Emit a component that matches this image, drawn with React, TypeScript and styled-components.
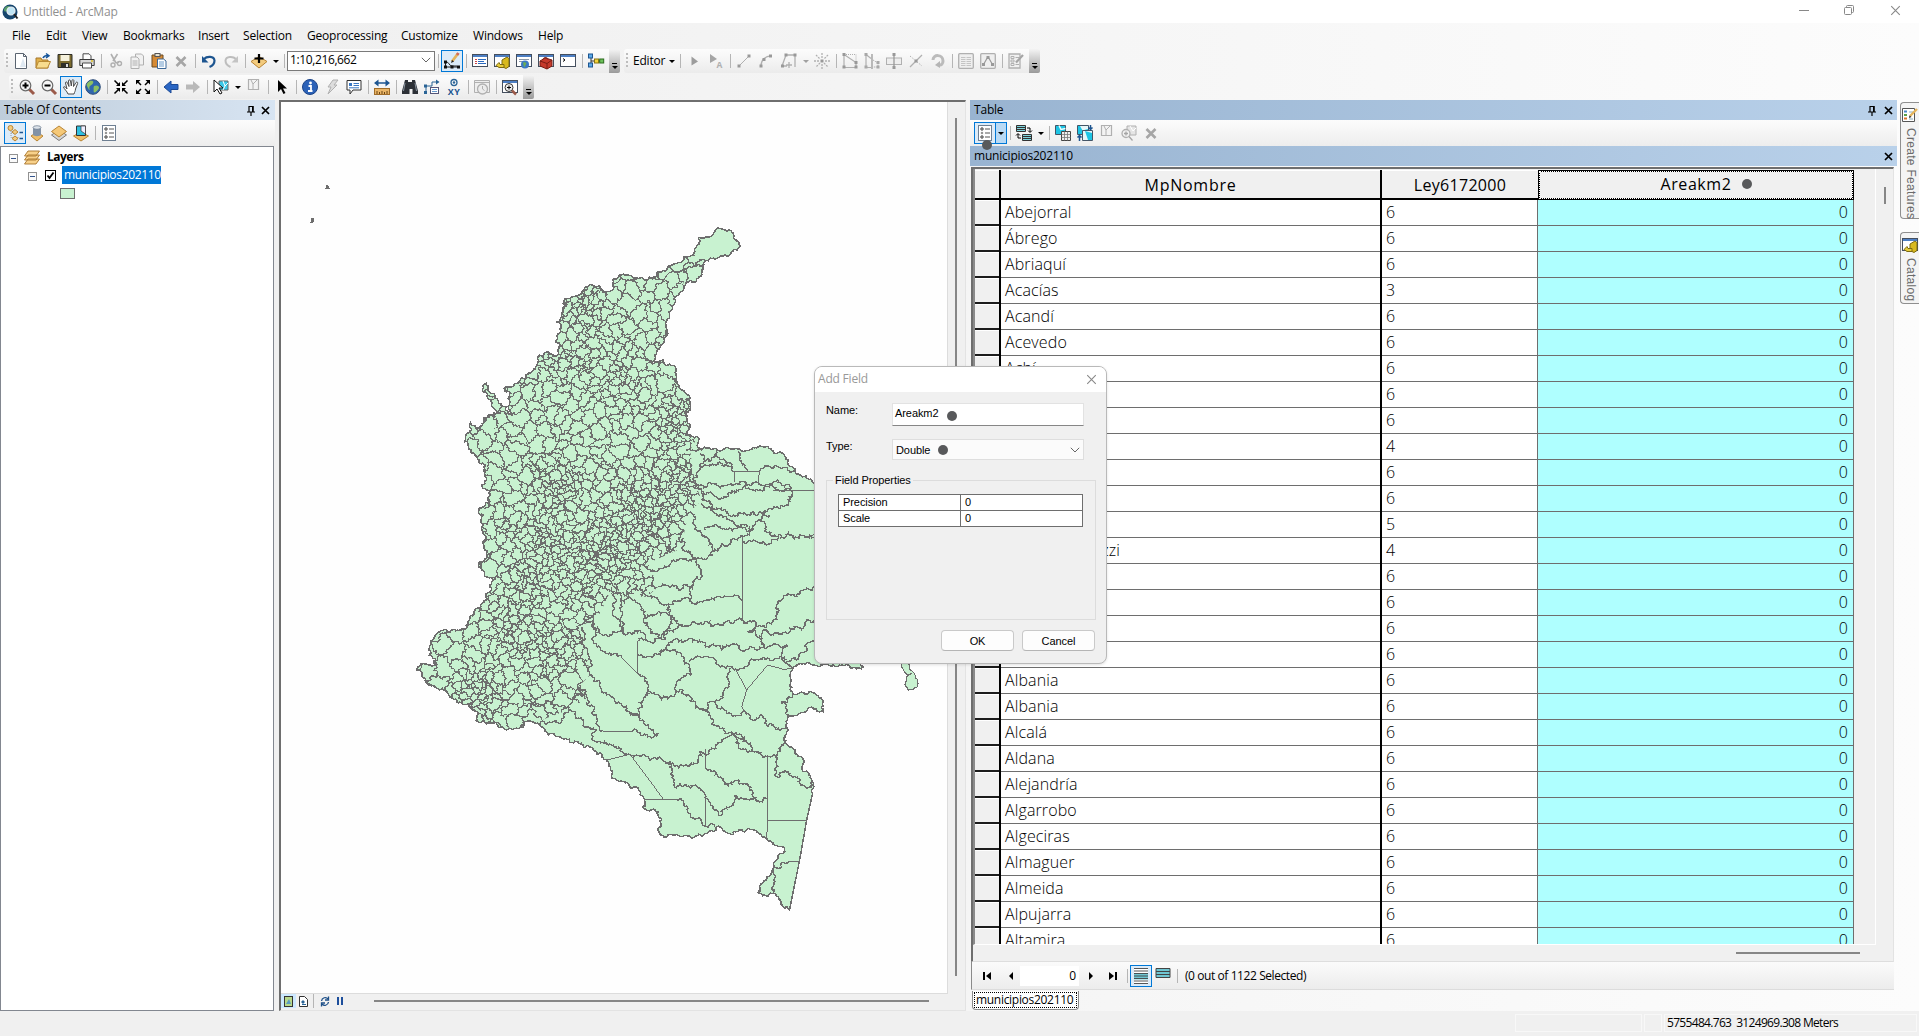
import React from "react";
import styled, { createGlobalStyle, css } from "styled-components";

const UI = `"Open Sans", "Noto Sans", sans-serif`;
const SANS = `"Liberation Sans", Arial, sans-serif`;

const Global = createGlobalStyle`
  html, body { margin: 0; padding: 0; overflow: hidden; }
  * { box-sizing: border-box; }
  svg { display: block; }
`;

/* ---------- window ---------- */
const Window = styled.div`
  width: 1919px; height: 1036px; overflow: hidden; position: relative;
  display: flex; flex-direction: column;
  background: linear-gradient(90deg, #f0f0f0 0, #f0f0f0 300px, #fcfcfc 1919px);
  font: 12px/16px ${UI}; letter-spacing: -0.2px; color: #000;
`;
const TitleBar = styled.header`
  height: 23px; background: #fff; display: flex; align-items: center; justify-content: space-between;
  color: #8f8f8f; padding: 0 18px 0 2px; flex: none;
`;
const TitleLeft = styled.div`display: flex; align-items: center; gap: 5px;`;
const WinButtons = styled.div`display: flex; gap: 35px; padding-bottom: 3px;`;
const MenuBar = styled.nav`
  height: 26px; display: flex; align-items: center; gap: 16px; padding-left: 12px; flex: none;
`;
const MenuItem = styled.span<{ $w: number }>`width: ${(p) => p.$w}px; white-space: nowrap;`;

/* ---------- toolbars ---------- */
const ToolRow = styled.div<{ $left: number; $h: number }>`
  height: ${(p) => p.$h}px; padding-left: ${(p) => p.$left}px; display: flex; align-items: flex-start; gap: 4px; flex: none;
`;
const Toolbar = styled.div`
  height: 24px; display: flex; align-items: center; border-radius: 3px;
  background: linear-gradient(#fcfcfc, #f4f4f4 50%, #ebebeb);
`;
const Slot = styled.span<{ $w?: number; $on?: boolean }>`
  width: ${(p) => p.$w ?? 22}px; height: 22px; flex: none;
  display: flex; align-items: center; justify-content: center;
  ${(p) => p.$on && css`background: #dcebf8; border: 1px solid #0078d7;`}
`;
const Sep = styled.i<{ $w?: number }>`
  width: ${(p) => p.$w ?? 6}px; height: 14px; flex: none; display: flex; justify-content: center;
  &::before { content: ""; width: 1px; height: 14px; background: #b5b5b5; }
`;
const Grip = styled.i`
  width: 2px; height: 16px; margin: 0 2px; flex: none;
  background: repeating-linear-gradient(#bdbdbd 0 2px, transparent 2px 4px);
`;
const Caret = styled.i<{ $w?: number; $dim?: boolean }>`
  width: ${(p) => p.$w ?? 11}px; flex: none; display: flex; justify-content: center;
  &::before { content: ""; border: 3px solid transparent; border-top-color: ${(p) => (p.$dim ? "#a0a0a0" : "#000")}; border-bottom: 0; }
`;
const Overflow = styled.i`
  width: 11px; height: 24px; margin-left: 2px; flex: none; background: linear-gradient(#f4f4f4, #9a9a9a);
  display: flex; flex-direction: column; align-items: center; justify-content: flex-end; padding-bottom: 4px; gap: 2px;
  border-radius: 0 2px 2px 0;
  &::before { content: ""; width: 5px; height: 1px; background: #000; }
  &::after { content: ""; border: 3px solid transparent; border-top-color: #000; border-bottom: 0; }
`;
const ScaleBox = styled.div`
  width: 148px; height: 20px; background: #fff; border: 1px solid #7a7a7a; display: flex; align-items: center;
  justify-content: space-between; padding: 0 3px 2px 2px; flex: none; letter-spacing: -0.38px;
`;
const EditorLabel = styled.span`width: 33px; margin-left: 3px; white-space: nowrap;`;

/* ---------- body ---------- */
const Body = styled.main`height: 911px; display: flex; flex: none;`;
const TocPanel = styled.section`width: 275px; display: flex; flex-direction: column;`;
const PanelTitle = styled.div<{ $active?: boolean }>`
  height: 20px; padding: 0 ${(p) => (p.$active ? 4 : 5)}px 0 4px; display: flex; align-items: center; justify-content: space-between; flex: none;
  background: ${(p) => (p.$active ? "linear-gradient(90deg, #99b4d1, #b9d1ea)" : "linear-gradient(90deg, #bfcddb, #d7e4f2)")};
`;
const TitleIcons = styled.span<{ $gap?: number }>`display: flex; gap: ${(p) => p.$gap ?? 7}px; align-items: center;`;
const PanelTools = styled.div<{ $pad: number }>`
  height: 26px; display: flex; align-items: center; padding-left: ${(p) => p.$pad}px; flex: none;
  background: linear-gradient(#fcfcfc, #ededed);
`;
const Tree = styled.div`
  flex: 1; background: #fff; border: 1px solid #828790; margin-right: 1px; padding: 1px 0 0 7px;
`;
const TreeRow = styled.div<{ $in: number }>`
  height: 18px; display: flex; align-items: center; padding-left: ${(p) => p.$in}px;
`;
const Expander = styled.i`
  width: 9px; height: 9px; border: 1px solid #919191; display: flex; align-items: center; justify-content: center; background: #fafafa; margin-top: 2px;
  &::before { content: ""; width: 5px; height: 1px; background: #33538c; }
`;
const Bold = styled.b`margin-left: 2px; font-weight: 700; letter-spacing: -0.5px;`;
const Check = styled.span`width: 11px; height: 11px; border: 1px solid #000; margin: 0 6px 0 8px; flex: none;`;
const Selected = styled.span`background: #0078d7; color: #fff; height: 18px; line-height: 18px; width: 99px; padding-left: 2px; white-space: nowrap; letter-spacing: -0.33px;`;
const Swatch = styled.i`width: 15px; height: 11px; background: #c8f2d0; border: 1px solid #6e6e6e;`;

const MapFrame = styled.section`
  width: 687px; margin-left: 4px; display: grid; grid-template-columns: 667px 1fr; grid-template-rows: 892px 1fr;
  border-left: 2px solid #6e6e6e; border-top: 2px solid #6e6e6e; border-right: 1px solid #e3e3e3; border-bottom: 1px solid #e3e3e3;
  background: #f0f0f0; height: 911px;
`;
const MapView = styled.div`background: #fefefe; overflow: hidden; border-right: 1px solid #dcdcdc; border-bottom: 1px solid #dcdcdc;`;
const ScrollCol = styled.div<{ $top: number; $len: number; $right?: number }>`
  padding: ${(p) => p.$top}px ${(p) => p.$right ?? 0}px 0 0; display: flex; justify-content: center;
  &::before { content: ""; width: 2px; height: ${(p) => p.$len}px; background: #868686; }
`;
const MapFoot = styled.div`
  grid-column: 1 / 3; display: flex; align-items: center; height: 14px;
`;
const FootSlot = styled.span<{ $on?: boolean; $w: number }>`
  width: ${(p) => p.$w}px; height: 14px; display: flex; align-items: center; justify-content: center;
  background: ${(p) => (p.$on ? "#cce8ff" : "transparent")};
`;
const HThumb = styled.i<{ $w: number; $ml: number }>`
  width: ${(p) => p.$w}px; height: 2px; background: #868686; margin-left: ${(p) => p.$ml}px;
`;

/* ---------- table panel ---------- */
const TablePanel = styled.section`width: 927px; margin-left: 4px; display: flex; flex-direction: column;`;
const OptionsBtn = styled.span`
  width: 33px; height: 22px; border: 1px solid #0078d7; background: #dcebf8; display: grid; grid-template-columns: 20px 11px; align-items: center; justify-items: center;
  position: relative;
`;
const OptionsArrow = styled.span`
  height: 20px; width: 100%; background: #b9daf5; border-left: 1px solid #0078d7; display: flex; align-items: center; justify-content: center;
`;
const Dot = styled.i<{ $l?: number }>`
  width: 10px; height: 10px; border-radius: 50%; background: #58595b; margin-left: ${(p) => p.$l ?? 0}px; flex: none;
`;
const HeadDot = styled(Dot)`margin-right: -20px;`;
const PointerDot = styled(Dot)`position: absolute; left: 7px; top: 17px;`;
const GridFrame = styled.div`
  margin: 1px 3px 0 1px; height: 795px; border-left: 2px solid #6e6e6e; border-top: 2px solid #6e6e6e; border-right: 1px solid #e3e3e3;
  display: grid; grid-template-columns: 903px 1fr; grid-template-rows: 776px 1fr; background: #f0f0f0;
  border-bottom: 1px solid #dedede;
`;
const Grid = styled.div`
  overflow: hidden; padding: 1px 0 0 0; border-left: 2px solid #8a8a8a; border-right: 1px solid #fff; border-bottom: 1px solid #fff;
`;
const columns = "24px 2px 379px 2px 156px 316px";
const HeadRow = styled.div`
  display: grid; grid-template-columns: ${columns}; height: 30px; font-size: 16px; letter-spacing: 0.35px; align-items: stretch;
`;
const HeadCell = styled.div<{ $focus?: boolean; $ls?: number }>`
  display: flex; align-items: center; justify-content: center; border-bottom: 2px solid #000; border-top: 1px solid #fff; background: #f0f0f0;
  letter-spacing: ${(p) => p.$ls ?? 0.3}px;
  ${(p) => p.$focus && css`border: 2px solid #000; outline: 1px dotted #fff; outline-offset: -2px; padding-bottom: 2px;`}
`;
const BlackLine = styled.i`background: #000;`;
const Row = styled.div`
  display: grid; grid-template-columns: ${columns}; height: 26px; font-size: 16px; line-height: 24px; font-weight: 300; letter-spacing: 0.12px;
`;
const RowHead = styled.div`background: #f0f0f0; border-bottom: 2px solid #1c1c1c; border-top: 1px solid #fff;`;
const Cell = styled.div<{ $num?: boolean }>`
  padding: 0 5px 0 4px; border-bottom: 1px solid #6e6e6e; white-space: nowrap; background: ${(p) => (p.$num ? "#afffff" : "#fff")};
  ${(p) => p.$num && css`text-align: right; border-right: 1px solid #6e6e6e;`}
`;
const LeyCell = styled(Cell)`border-right: 1px solid #6e6e6e;`;
const HScroll = styled.div`grid-column: 1 / 3; display: flex; align-items: center;`;
const NavBar = styled.div`
  height: 28px; margin: 0 3px 0 1px; display: flex; align-items: center; background: linear-gradient(#fbfbfb, #ececec);
  border-bottom: 1px solid #dcdcdc; border-left: 1px solid #8a8a8a;
`;
const NavInput = styled.span`width: 59px; height: 20px; background: #fff; text-align: right; padding: 2px 3px 0 0; margin: 0 1px 0 0;`;
const NavText = styled.span`margin-left: 5px; white-space: nowrap; letter-spacing: -0.42px;`;
const BottomTab = styled.div`
  width: 107px; height: 19px; margin: 1px 0 0 2px; background: #fff; border: 1px solid #8a8a8a; border-top: 0; border-radius: 0 0 4px 4px; padding: 2px 2px 2px;
`;
const TabText = styled.div`outline: 1px dotted #000; height: 14px; line-height: 13px; padding-left: 1px; white-space: nowrap; letter-spacing: -0.3px;`;

const Dock = styled.aside`width: 19px; margin-left: 3px; padding-top: 2px; display: flex; flex-direction: column; gap: 13px;`;
const DockTab = styled.div<{ $h: number }>`
  height: ${(p) => p.$h}px; border: 1px solid #8f8f8f; border-right: 0; border-radius: 4px 0 0 4px; background: #f4f4f4;
  padding: 4px 0 0 1px; display: flex; flex-direction: column; gap: 5px;
`;
const Vertical = styled.span`
  writing-mode: vertical-rl; font: 12px/16px ${SANS}; color: #6a6a6a; letter-spacing: 0.3px; white-space: nowrap;
`;

const StatusBar = styled.footer`
  flex: 1; background: #f0f0f0; display: flex; justify-content: flex-end; align-items: flex-start; padding-top: 3px;
`;
const StatusBox = styled.div<{ $w: number }>`
  width: ${(p) => p.$w}px; height: 18px; border: 1px solid #f8f8f8; margin-right: 2px; padding-left: 2px; line-height: 15px; white-space: pre; letter-spacing: -0.68px;
`;

/* ---------- dialog ---------- */
const Dialog = styled.div`
  position: absolute; left: 814px; top: 366px; width: 293px; height: 298px; border: 1px solid #b9b9b9; border-radius: 8px; overflow: hidden;
  background: #f0f0f0; display: flex; flex-direction: column; font: 11px/14px ${SANS}; letter-spacing: -0.08px;
  box-shadow: 0 1px 3px rgba(0, 0, 0, 0.12);
`;
const DialogTitle = styled.div`
  height: 25px; background: #fff; color: #999; font: 12px/22px ${UI}; letter-spacing: -0.2px; padding: 0 9px 1px 3px; display: flex; justify-content: space-between; align-items: center;
`;
const Form = styled.div`display: grid; grid-template-columns: 66px 192px; padding: 11px 0 0 11px; row-gap: 13px;`;
const Label = styled.span``;
const Input = styled.div`height: 23px; background: #fff; border: 1px solid #e2e2e2; border-bottom-color: #868686; display: flex; padding: 2px 0 0 2px;`;
const InputDot = styled(Dot)`margin: 5px 0 0 9px;`;
const Select = styled.div`height: 21px; background: #fbfbfb; border: 1px solid #dedede; display: flex; align-items: center; padding: 0 3px;`;
const Spacer = styled.span`flex: 1;`;
const Group = styled.fieldset`
  margin: 14px 10px 0 11px; height: 146px; border: 1px solid #dcdcdc; padding: 7px 12px 0 11px; min-width: 0;
`;
const Legend = styled.legend`margin-left: -5px; padding: 0 2px; line-height: 13px;`;
const Props = styled.div`
  display: grid; grid-template-columns: 1fr 1fr; gap: 1px; padding: 1px; background: #6e6e6e;
  & > span { background: #fff; height: 15px; line-height: 15px; padding-left: 4px; }
`;
const Buttons = styled.div`display: flex; gap: 8px; padding: 10px 0 0 126px;`;
const Button = styled.div`
  width: 73px; height: 21px; background: #fdfdfd; border: 1px solid #c9c9c9; border-bottom-color: #b5b5b5; border-radius: 4px; text-align: center; line-height: 20px;
`;

/* ---------- icons ---------- */
const G = "#b0b0b0";
const Ic = ({ children, s = 16 }: { children: React.ReactNode; s?: number }) => (
  <svg width={s} height={s} viewBox="0 0 16 16" fill="none" overflow="visible">{children}</svg>
);
const Win = ({ children }: { children?: React.ReactNode }) => (
  <Ic><rect x=".5" y="1.5" width="15" height="12" fill="#fff" stroke="#454f5e" /><rect x="1" y="2" width="14" height="2" fill="#4d7fc4" />{children}</Ic>
);
const icons: Record<string, React.ReactNode> = {
  new: <Ic><path d="M2.5.5h8l3 3v12h-11z" fill="#fff" stroke="#5a6470" /><path d="M10.5.5v3h3" stroke="#5a6470" /><path d="M10 5l3 9H7z" fill="#dfe9f2" /></Ic>,
  open: <Ic><path d="M1 5h5l1 2h6v8H1z" fill="#e0b04a" stroke="#a6762a" /><path d="M3.500 8.500h12l-3 6.500H1z" fill="#f8dc8e" stroke="#b98a34" /><path d="M8 5c1-2.500 3-2.500 5-2.500M11 .5l3 2.200-3 2.300" stroke="#14549a" strokeWidth="1.500" /></Ic>,
  save: <Ic><path d="M1 1.500h14v13H1z" fill="#7b6a2e" stroke="#2e2e28" /><rect x="3.500" y="2" width="9" height="6" fill="#f5f1dc" /><rect x="4" y="10" width="8" height="5" fill="#2e2e28" /><rect x="9" y="11" width="2" height="3" fill="#ddd" /></Ic>,
  print: <Ic><path d="M4 6V.8h6l2 2V6" fill="#fff" stroke="#4a4a4a" /><path d="M.8 6.500h14.400v6H.8z" fill="#d8d8d8" stroke="#3a3a3a" /><path d="M3.500 10h9v5h-9z" fill="#fff" stroke="#4a4a4a" /><path d="M12 8h2" stroke="#e0c020" strokeWidth="1.500" /></Ic>,
  cut: <Ic><path d="M4 1l5 9M10.500 1L6 8M9 10l3-1" stroke={G} strokeWidth="1.600" /><circle cx="6" cy="12" r="2" stroke={G} strokeWidth="1.400" /><circle cx="12.500" cy="10.500" r="2" stroke={G} strokeWidth="1.400" /></Ic>,
  copy: <Ic><path d="M6.500 1h6l2 2v9h-8z" fill="#f1f1f1" stroke={G} /><path d="M2 4h6l2 2v9.500H2z" fill="#f1f1f1" stroke={G} /><path d="M3.500 8h5M3.500 10h5M3.500 12h5" stroke={G} /></Ic>,
  paste: <Ic><path d="M1 2h11v12H1z" fill="#d58a35" stroke="#6b4a22" /><rect x="4" y=".5" width="5" height="3" fill="#e9e2cf" stroke="#555" /><path d="M6.500 6h6l2.500 2v7.500H6.500z" fill="#fff" stroke="#3c6898" /><path d="M8 9h5M8 11h5M8 13h5" stroke="#6a9ac8" /></Ic>,
  del: <Ic><path d="M3.500 4l9 9M12.500 4l-9 9" stroke="#a6a6a6" strokeWidth="2.600" /></Ic>,
  undo: <Ic><path d="M3 6c3-3 10-3 10.500 1.500C13.500 11 11 13 8.500 14" stroke="#1d5590" strokeWidth="2.200" /><path d="M1 3v6.500h6.500z" fill="#1d5590" /></Ic>,
  redo: <Ic><path d="M13 6C10 3 3 3 2.500 7.500 2.500 11 5 13 7.500 14" stroke="#bdbdbd" strokeWidth="2" /><path d="M15 3v6.500H8.500z" fill="#c4c4c4" /></Ic>,
  add: <Ic><path d="M8 3.500l8 5-8 6.500-8-6.500z" fill="#f3cb7e" stroke="#b98534" /><path d="M8 1v9M3.500 5.500h9" stroke="#000" strokeWidth="2.200" /></Ic>,
  edit: <Ic><path d="M1.500 9.500v4.500h13.500M2 9c3-.5 3 4 6 4l5 0" stroke="#222" strokeWidth="1" /><path d="M0 7.500h3v3H0zM0 12.500h3v3H0zM6.500 12.500h3v3h-3zM13 12.500h3v3h-3z" fill="#111" /><path d="M8 8.500l6-8" stroke="#e5b45c" strokeWidth="2.800" /><path d="M7 10l1-3 2 1.500z" fill="#222" /><path d="M13 2l1.500-2" stroke="#d26a5a" strokeWidth="2.800" /></Ic>,
  toc: <Win><path d="M3 6.500h2M3 8.500h2M3 10.500h2" stroke="#c44" /><path d="M6 6.500h8M6 8.500h6M6 10.500h8" stroke="#2a6ac0" /></Win>,
  catalog: <Win><path d="M8 7l5-3 2 1.500v8l-3 2-4-2z" fill="#d8b91e" stroke="#7d6a10" /><path d="M2 12.500l3-3 1 2h4v3H5z" fill="#e7cd3a" stroke="#7d6a10" /></Win>,
  search: <Win><path d="M3 6.500h10M3 8.500h6" stroke="#8a97a8" /><circle cx="9" cy="11.500" r="4" fill="#3b78c4" /><path d="M7 9.500c3-1 4 1 3 2s-1 3-2 2.500z" fill="#6cae54" /></Win>,
  toolbox: <Win><path d="M2 8l5-3 7 2v6l-5 3-7-3z" fill="#c63a2c" stroke="#7a1d14" /><path d="M2 8l7 2.500 5-3.500M9 10.500V16M5 6c1-2 5-2 5 .5" stroke="#7a1d14" /></Win>,
  python: <Win><path d="M3 5.500l2 1.500-2 1.500" stroke="#000" /></Win>,
  model: <Ic><path d="M3 3v10M3 8h9" stroke="#333" /><rect x=".5" y="1" width="4" height="4" fill="#5ba9e8" stroke="#1d5590" /><rect x=".5" y="10" width="4" height="4" fill="#5ba9e8" stroke="#1d5590" /><rect x="6.500" y="6" width="4" height="4" fill="#f2d43a" stroke="#8a7412" /><rect x="11.700" y="6" width="4" height="4" fill="#6cc05a" stroke="#2a6a1c" /></Ic>,
  zin: <Ic><path d="M10 10l5 5" stroke="#9b5a4a" strokeWidth="3" /><circle cx="6.500" cy="6.500" r="5.300" fill="#f6f6f6" stroke="#6a6a6a" strokeWidth="1.200" /><path d="M6.500 3.500v6M3.500 6.500h6" stroke="#000" strokeWidth="2" /></Ic>,
  zout: <Ic><path d="M10 10l5 5" stroke="#9b5a4a" strokeWidth="3" /><circle cx="6.500" cy="6.500" r="5.300" fill="#f6f6f6" stroke="#6a6a6a" strokeWidth="1.200" /><path d="M3.500 6.500h6" stroke="#000" strokeWidth="2" /></Ic>,
  hand: <Ic><path d="M5 15c-1-3-4-5-4.500-7 1.500-1 2.500.5 3.500 2L2.500 4c0-1.500 1.500-1.500 2 0L6 7.500 5.500 2c0-1.500 1.800-1.500 2 0L8.300 7 9 1.500c.2-1.300 2-1 1.900.4L10.500 7.500 13 3.500c.8-1 2-.3 1.600 1L12.500 10c0 2-1 3-1.500 5z" fill="#fff" stroke="#4a4a4a" /></Ic>,
  globe: <Ic><circle cx="8" cy="8" r="7.300" fill="#2f66ae" stroke="#31507a" /><path d="M5 2c4-1 4 2 2 3.500S4 7 4.500 10 3 9 2 7s1-4 3-5zM9 7c3-1.500 5 0 5 1.500s-3 5-4.500 5S9 10 8.500 9z" fill="#8cc063" /></Ic>,
  fixin: <Ic><path d="M1.500 1.500l5 5M14.500 1.500l-5 5M1.500 14.500l5-5M14.500 14.500l-5-5" stroke="#000" strokeWidth="1.500" /><path d="M7 3v4H3zM9 3v4h4zM7 13V9H3zM9 13V9h4z" fill="#000" /></Ic>,
  fixout: <Ic><path d="M2 2l4 4M14 2l-4 4M2 14l4-4M14 14l-4-4" stroke="#000" strokeWidth="1.500" /><path d="M1 1h4.500L1 5.500zM15 1h-4.500L15 5.500zM1 15h4.500L1 10.500zM15 15h-4.500l4.500-4.500z" fill="#000" /></Ic>,
  back: <Ic><path d="M1 8l7-6v3.500h7v5H8V14z" fill="#2a66c4" stroke="#1c4a96" /></Ic>,
  fwd: <Ic><path d="M15 8L8 2v3.500H1v5h7V14z" fill="#b9b9b9" /></Ic>,
  select: <Ic><path d="M6 2h9v9H6z" fill="#3cc8e8" stroke="#666" /><path d="M10 2l2 5 3-3M12 7l-2 4" stroke="#fff" /><path d="M1 1v12l3-3 3 5 2-1-3-5h4z" fill="#fff" stroke="#111" /></Ic>,
  clear: <Ic><path d="M2.500.5h10v10h-10z" fill="#f3f3f3" stroke={G} strokeWidth="1.200" /><path d="M5 1l2 4v5M7 5l4-4" stroke={G} /></Ic>,
  arrow: <Ic><path d="M4 1v12l3-3 2.500 5 2-1-2.500-4.500h4z" fill="#000" /></Ic>,
  info: <Ic><circle cx="8" cy="8" r="7.500" fill="#2c62b8" stroke="#1c4488" /><circle cx="8.500" cy="4" r="1.400" fill="#fff" /><path d="M6.500 7h2.500v5M6 12h4.500" stroke="#fff" strokeWidth="1.800" /></Ic>,
  bolt: <Ic><path d="M9 1h5l-4 5h3l-9 9 3-7H4z" fill="#ddd" stroke={G} /></Ic>,
  popup: <Ic><path d="M1 1.500h14v9.500H7l-3 4v-4H1z" fill="#fff" stroke="#333" /><rect x="3" y="4" width="3" height="3" fill="#3a78c4" /><path d="M7.500 4.500H13M7.500 6.500H13M3 8.800h10" stroke="#3a78c4" /></Ic>,
  measure: <Ic><path d="M2 4h12" stroke="#1d5590" strokeWidth="1.500" /><path d="M0 4l4.500-3.500v7zM16 4l-4.500-3.500v7z" fill="#1d5590" /><rect x=".5" y="9.500" width="15" height="6" fill="#eab566" stroke="#a06c28" /><path d="M3 12v3M5.500 13v2M8 12v3M10.500 13v2M13 12v3" stroke="#6a4414" /></Ic>,
  bino: <Ic><path d="M3 1h3v2h4V1h3l3 11v3h-5.500v-5h-3v5H0v-3z" fill="#2c3036" /><path d="M3 4L1.500 12M13 4l1.500 8" stroke="#8b96a2" /></Ic>,
  route: <Ic><path d="M2 14V7h6V3h5" stroke="#2a6496" /><path d="M12 .5l3.500 2.500L12 5.500z" fill="#2a6496" /><rect x="6.500" y="8.500" width="8" height="6" fill="#fff" stroke="#557" /><path d="M8 10.500h5M8 12.500h5" stroke="#69c" /><path d="M0 5.500h3v3H0zM0 12h3v3H0z" fill="#2a6496" /></Ic>,
  xy: <Ic><circle cx="8" cy="3.500" r="3" stroke="#2a6496" strokeWidth="1.300" /><circle cx="8" cy="3.500" r="1.200" fill="#2a6496" /><text x="8" y="15.500" textAnchor="middle" fontSize="9" fontWeight="700" fontFamily="Open Sans" fill="#1d5590" letterSpacing="0.500">XY</text></Ic>,
  time: <Ic><path d="M.5 1.500h15v12H.5z" fill="#eee" stroke={G} /><circle cx="8.500" cy="10" r="5" fill="#ececec" stroke={G} strokeWidth="1.300" /><path d="M8.500 7v3l2 1.500M1 3.500h14" stroke={G} /></Ic>,
  viewer: <Win><circle cx="7" cy="8.500" r="4" fill="#eee" stroke="#333" /><path d="M7 6.500v4M5 8.500h4" stroke="#000" /><path d="M10 11.500l4 4" stroke="#9b5a4a" strokeWidth="2.500" /></Win>,
  eArrow: <Ic><path d="M5.500 3.500l6.500 5-6.500 4z" fill="#9c9c9c" /></Ic>,
  eArrowA: <Ic><path d="M2 1l7 5-7 4z" fill="#a5a5a5" /><text x="8.500" y="14.500" fontSize="8.500" fontWeight="700" fontFamily="Open Sans" fill={G}>A</text></Ic>,
  eLine: <Ic><path d="M3 13L13 3" stroke={G} /><path d="M1.500 11.500h3v3h-3zM11.500 1.500h3v3h-3z" fill="#999" /></Ic>,
  eArc: <Ic><path d="M3 13C3 6 8 3 13 3" stroke={G} strokeWidth="1.300" /><path d="M1.500 11.500h3v3h-3zM4.500 5h3v3h-3zM11 1.500h3v3h-3z" fill="#999" /></Ic>,
  ePoly: <Ic><path d="M5 2h9v12M5 2L1 13h5M8 9v6M5 12h6" stroke={G} strokeWidth="1.300" /><path d="M3.500.5h3v3h-3zM12.500.5h3v3h-3zM0 11.500h3v3H0z" fill="#999" /></Ic>,
  eSun: <Ic><path d="M8 0v5M8 11v5M0 8h5M11 8h5M2 2l4 4M10 10l4 4M14 2l-4 4M6 10l-4 4" stroke={G} strokeWidth="1.300" strokeDasharray="2 1" /><path d="M6.500 6.500h3v3h-3z" fill="#999" /></Ic>,
  eRect: <Ic><path d="M2 1.500v13h12v-5L2 1.500" stroke={G} strokeWidth="1.200" /><path d="M2 1.500h12v8" stroke={G} strokeDasharray="1 1" /><path d="M.5 0h3v3h-3zM.5 12.500h3v3h-3zM12.500 12.500h3v3h-3zM12.500 8h3v3h-3z" fill="#999" /></Ic>,
  eTri: <Ic><path d="M2 1.500v13h5M2 1.500l5 4" stroke={G} strokeWidth="1.200" /><path d="M8 1v15" stroke="#999" strokeWidth="1.300" /><path d="M9 7l5 3v4H9" stroke={G} strokeDasharray="1.500 1" /><path d="M.5 0h3v3h-3zM.5 12.500h3v3h-3zM12.500 12.500h3v3h-3zM12.500 8h3v3h-3z" fill="#a8a8a8" /></Ic>,
  eSplit: <Ic><rect x=".5" y="5" width="15" height="6.500" fill="#eee" stroke={G} /><path d="M8 1v14" stroke="#999" strokeWidth="1.300" /><path d="M6.500 0h3v3h-3zM6.500 13h3v3h-3z" fill="#999" /></Ic>,
  eCross: <Ic><path d="M2 14L14 2" stroke={G} strokeWidth="1.300" /><path d="M2 3l12 10" stroke={G} strokeDasharray="1.500 1.500" /><path d="M6.500 6.500h3v3h-3z" fill="#999" /></Ic>,
  eRot: <Ic><path d="M3 7c0-6 10-6 10 1 0 3-2 4-3 4" stroke="#bbb" strokeWidth="3" /><path d="M10 8v7L5 12z" fill="#b5b5b5" /></Ic>,
  eTable: <Ic><rect x=".7" y=".7" width="14.600" height="14.600" rx="1" fill="#efefef" stroke={G} strokeWidth="1.300" /><path d="M3 4.500h4.500M8.500 4.500H13M3 6.500h4.500M8.500 6.500H13M3 8.500h4.500M8.500 8.500H13M3 10.500h4.500M8.500 10.500H13M3 12.500h4.500M8.500 12.500H13" stroke="#c4c4c4" /></Ic>,
  eProps: <Ic><rect x=".7" y=".7" width="14.600" height="14.600" rx="1" fill="#efefef" stroke={G} strokeWidth="1.300" /><path d="M3.500 11.500l4-7h1l4 7" stroke="#999" strokeWidth="1.200" /><path d="M2 10h3v3H2zM6.500 3h3v3h-3zM11 10h3v3h-3z" fill="#999" /></Ic>,
  eCreate: <Ic><path d="M1 1h11v14H1z" fill="#f0f0f0" stroke={G} strokeWidth="1.300" /><path d="M3 3.500h3v2H3zM3 7h3v2H3zM3 10.500h3v2H3zM7.500 4.500H11M7.500 11.500H11" stroke={G} /><path d="M8 9.500l7-7.500" stroke="#a5a5a5" strokeWidth="2.200" /></Ic>,
  tOrder: <Ic><path d="M4 4v8.500h8M4 8h4" stroke="#9a9a9a" strokeDasharray="1 1" /><circle cx="3.500" cy="3" r="2.500" fill="#f3cb7e" stroke="#b98534" /><path d="M8 4.500l3 2.500-3 2.500L5 7zM8 11l3 2.500L8 16l-3-2.500z" fill="#f3cb7e" stroke="#b98534" /><path d="M12.500 7.500H16M12.500 13.500H16" stroke="#1d5590" strokeWidth="1.500" /></Ic>,
  tSource: <Ic><path d="M8 7l6 4-6 5-6-5z" fill="#f0bf6a" stroke="#b98534" /><path d="M4 2v8c1 1.500 7 1.500 8 0V2z" fill="#8292a6" /><ellipse cx="8" cy="2.500" rx="4" ry="1.800" fill="#dce3ea" stroke="#66758a" strokeWidth=".7" /></Ic>,
  tVis: <Ic><path d="M8 5l7.500 5L8 15.500.5 10z" fill="#d5d5d5" stroke="#7a7a7a" /><path d="M8 1l7.500 5.500L8 12 .5 6.500z" fill="#f5c877" stroke="#b98534" /></Ic>,
  tSel: <Ic><path d="M8 7l7.500 4-7.500 5-7.500-5z" fill="#f0bf6a" stroke="#b98534" /><path d="M3.500 1h9v9.500h-9z" fill="#2fc0e0" stroke="#333" /><path d="M8 1h4.500v8L8 6z" fill="#eef" stroke="#333" strokeWidth=".7" /></Ic>,
  list: <Ic><rect x="1.500" y=".5" width="13" height="15" fill="#fff" stroke="#6e7f92" /><path d="M8 4h5M8 8h5M8 12h5" stroke="#555" /><circle cx="5" cy="4" r="1.200" stroke="#333" /><circle cx="5" cy="8" r=".8" stroke="#777" /><circle cx="5" cy="12" r="1.200" stroke="#333" /></Ic>,
  layers: <Ic><path d="M4 10h11.500l-3.500 5H.5zM4 6h11.500l-3.500 5H.5zM4 2h11.500l-3.500 5H.5z" fill="#f8d18a" stroke="#a8742a" strokeWidth=".9" /></Ic>,
  related: <Ic><path d="M.5.500h9v6h-9zM6.500 9.500h9v6h-9z" fill="#7fd4dc" stroke="#333" /><path d="M.5 2.500h9M.5 4.500h9M6.500 11.500h9M6.500 13.500h9" stroke="#333" /><path d="M11 3h3v4M12 5.500l2 2 2-2M5 13H2V9M0 10.500l2-2 2 2" stroke="#000" /></Ic>,
  byattr: <Ic><path d="M.5.500h10v9H.5z" fill="#1cc4e4" stroke="#456" /><path d="M4 .5l2 4 4.500-1" stroke="#eff" strokeWidth="1.500" /><path d="M6.500 6.500h9v9h-9z" fill="#eee" stroke="#444" /><path d="M6.500 9.500h9M6.500 12.500h9M9.500 6.500v9M12.500 6.500v9" stroke="#777" strokeWidth=".8" /></Ic>,
  switch: <Ic><path d="M.5.500h11v9H.5z" fill="#1cc4e4" stroke="#456" /><path d="M3 1l2.500 4.500L11 4V1z" fill="#e7f6f8" /><path d="M5.500 5.500h10v10h-10z" fill="#e7f6f8" stroke="#456" /><path d="M8 6l3 9h4V8z" fill="#1cc4e4" /><path d="M13.500 0v4M11.500 2.500l2 2 2-2M2.500 16v-5M.5 12.500l2-2 2 2" stroke="#1d5590" strokeWidth="1.500" /></Ic>,
  zoomsel: <Ic><path d="M6 1h9v9H6z" fill="#e5e5e5" stroke={G} /><path d="M9 1l3 5 3-3" stroke="#fff" /><circle cx="5" cy="8.500" r="4" fill="#f2f2f2" stroke={G} strokeWidth="1.300" /><path d="M5 6.500v4M3 8.500h4M8 11.500l3.500 4" stroke="#a5a5a5" strokeWidth="1.300" /></Ic>,
  all: <Ic><path d="M1 .5h14v15H1z" fill="#fff" /><path d="M1 5h14v6.500H1z" fill="#6fc6d2" /><path d="M1 .5h14M1 3h14M1 5.500h14M1 8h14M1 10.500h14M1 13h14M1 15.500h14" stroke="#444" strokeWidth=".9" /></Ic>,
  some: <Ic><path d="M1 .5h14v9H1z" fill="#6fc6d2" stroke="#444" /><path d="M1 3.500h14M1 6.500h14" stroke="#444" /></Ic>,
};
const Pin = () => <svg width="10" height="11" viewBox="0 0 10 11"><path d="M3 1.500h4v5M3 1v5.500M1 7h8M5 7v4" stroke="#000" fill="none" strokeWidth="1.200" /><path d="M6 1h1.500v6H6z" /></svg>;
const Close = ({ s = 9, c = "#000", w = 1.7 }) => (
  <svg width={s} height={s} viewBox="0 0 9 9"><path d="M1 1l7 7M8 1L1 8" stroke={c} strokeWidth={w} /></svg>
);
const Chevron = () => <svg width="10" height="6" viewBox="0 0 10 6"><path d="M.8.800L5 5 9.200.800" fill="none" stroke="#666" /></svg>;
const Play = ({ left, bar }: { left?: boolean; bar?: boolean }) => (
  <svg width="8" height="8" viewBox="0 0 8 8"><g transform={left ? "translate(8 0) scale(-1 1)" : undefined}><path d={bar ? "M0 0l5 4-5 4z" : "M2 0l4 4-4 4z"} />{bar && <path d="M6 0h2v8H6z" />}</g></svg>
);

type Item = string;
/* "|" separator, "v"/"d" caret, "*" prefix for a pressed tool, "~" a one pixel gap */
const Tools = ({ items }: { items: Item[] }) => (
  <>
    {items.map((it, i) => {
      if (it === "|") return <Sep key={i} />;
      if (it === "v") return <Caret key={i} />;
      if (it === "d") return <Caret key={i} $dim />;
      if (it === "~") return <Slot key={i} $w={1} />;
      const on = it[0] === "*";
      return <Slot key={i} $on={on}>{icons[on ? it.slice(1) : it]}</Slot>;
    })}
  </>
);

/* ---------- map ---------- */
type P = [number, number];
const parse = (s: string, dy = 0): P[] => s.trim().split(/\s+/).map((q) => { const [x, y] = q.split(",").map(Number); return [x, y + dy] as P; });
const hash = (a: number, b: number) => { const v = Math.sin(a * 12.9898 + b * 78.233) * 43758.5453; return v - Math.floor(v); };

const LIMIT = 6;
const roughSeg = (a: P, b: P, k: number, out: P[]) => {
  const dx = b[0] - a[0], dy = b[1] - a[1], len = Math.hypot(dx, dy);
  if (len < 6) { out.push(b); return; }
  const lo = a[0] < b[0] || (a[0] === b[0] && a[1] < b[1]) ? 1 : -1;
  const h = (hash(Math.round(a[0] + b[0]), Math.round(a[1] + b[1])) - 0.5) * k * len;
  const d = (Math.max(-LIMIT, Math.min(LIMIT, h)) / len) * lo;
  const m: P = [(a[0] + b[0]) / 2 - dy * d, (a[1] + b[1]) / 2 + dx * d];
  roughSeg(a, m, k, out); roughSeg(m, b, k, out);
};
const toPath = (pts: P[], k: number, close = false) => {
  const out: P[] = [pts[0]];
  const src = close ? [...pts, pts[0]] : pts;
  for (let i = 1; i < src.length; i++) k ? roughSeg(src[i - 1], src[i], k, out) : out.push(src[i]);
  return "M" + out.map((p) => p[0].toFixed(1) + " " + p[1].toFixed(1)).join("L") + (close ? "Z" : "");
};

const north = `950,28 975,30 1000,42 1018,68 1018,82 990,103 950,115 915,123 905,150 885,186 858,188 835,225 820,255 806,275 800,315 798,348 782,380 765,405 752,428 790,417 797,435 818,436 828,465 832,493 862,525 870,550 870,570 858,575 858,645 892,650 905,690 950,688 1025,694 1070,684 1115,690 1130,700 1145,698 1165,720 1185,755 1200,765 1260,800`;
const south = `1300,280 1390,321 1180,322 1180,402 1200,398 1250,405 1268,430 1270,455 1255,455 1225,443 1200,460 1157,463 1157,550 1185,575 1210,600 1215,635 1235,660 1238,700`;
const tip = `1238,700 1220,780 1198,905 1168,1052`;
const south2 = `1168,1052 1140,1020 1122,1000 1105,1008 1075,997 1120,925 1155,875 1145,860 1100,835 1050,808 1000,822 985,820 950,800 920,820 875,835 840,830 800,832 775,815 782,800 775,755 745,752 728,742 732,715 715,688 690,683 670,665 637,655 625,605 580,570 530,545 510,548 445,525 410,490 370,488 368,503 310,503 285,487 235,485 235,462 212,445 210,430 190,433 140,395 110,385 75,355 50,332 70,310 105,315 107,300 88,285 88,258 110,222 135,208 200,205 205,190 225,150 260,100 275,90 275,65 288,58 262,52`;
const west = `255,1070 235,1040 238,1025 260,1010 258,950 250,885 235,878 270,850 270,825 245,795 260,780 255,735 240,730 215,700 195,665 198,645 215,628 212,608 232,630 265,585 300,580 275,560 275,540 262,530 248,508 258,490 280,520 320,560 325,580 335,580 332,520 312,505 350,490 400,450 412,410 435,398 475,400 480,375 468,362 480,310 468,305 485,285 490,250 520,230 560,200 605,208 640,208 640,175 660,165 700,175 765,172 805,140 850,112 885,95 895,55 920,50 950,28`;
const outline = [
  toPath([...parse(north), ...parse(south, 1020)], 0.6),
  toPath(parse(tip, 1020), 0),
  toPath([...parse(south2, 1020), ...parse(west)], 0.6),
].map((d, i) => (i ? "L" + d.slice(1) : d)).join("") + "Z";

const zone = `0,0 850,60 868,135 850,190 835,240 900,400 900,640 870,690 885,790 905,840 865,880 850,950 845,985 720,1040 780,1080 775,1100 740,1130 670,1130 640,1095 600,1180 545,1220 570,1365 535,1400 560,1435 505,1470 370,1520 0,1540`;

const rivers: P[][] = [
  ...[
    "868,103 870,130 885,138 915,123", "885,95 868,103", "872,140 910,135", "840,152 872,140", "848,152 862,170 858,188", "858,690 905,692",
    "880,780 900,745 950,735 975,735 1003,755", "1078,755 1110,740 1145,745 1185,755", "915,722 955,712 980,730 1003,755", "955,712 950,690", "900,700 915,720 900,742",
    "1015,695 1022,715 1035,735 1042,752", "885,800 910,805 940,790 1000,795 1075,788 1140,788 1170,808 1100,800 1020,808 960,838 905,815", "885,780 880,800 905,815 905,840",
    "1180,812 1165,840 1140,865 1105,868 1082,900 1030,950 985,975 938,993", "905,840 950,865 1000,885 1040,885 1110,888", "905,850 950,885 1000,905 1045,920", "915,930 960,920 1010,925 1040,935 1050,920",
    "1082,900 1095,925 1130,950 1170,945 1200,955 1260,950", "1028,970 1070,965 1105,972 1135,955", "850,955 845,985 890,1015 925,1010 938,993 905,940 880,890 865,880", "720,1040 745,1048 780,1045 830,1025 890,1020 900,1045 895,1080",
  ].map((s) => parse(s)),
  ...[
    "895,50 880,70 870,120 890,132 960,110 1000,108 1030,120", "775,80 830,85 880,75", "740,110 800,135 870,120", "805,135 805,165", "735,175 775,155 805,165 810,205 780,235 750,220 730,185 735,175", "660,122 700,122 735,155 730,180",
    "810,170 850,200 920,185 1030,182 1075,200 1120,185 1130,140 1170,105 1260,82", "1075,200 1045,215 1085,240 1095,210 1110,225 1160,220 1170,205 1210,205 1225,180 1260,180", "850,195 820,215 790,238 715,242", "713,282 780,285 800,260 825,238 930,258 965,270 1000,252 1020,268 1080,262 1160,255 1145,295 1190,300 1220,250 1260,248",
    "800,265 830,280 862,310 870,345 840,360 828,390", "867,305 915,290 950,305 990,320 1010,330 1060,300 1140,290", "1145,295 1160,310 1180,322", "990,325 985,360 970,405 940,425 915,450", "1085,240 1095,262", "1157,463 1157,432 1145,430 1160,415 1180,402",
    "940,425 980,460 1040,460 1065,480 1085,465 1095,490 1140,512 1157,505", "580,180 590,210 580,250 620,280 665,292", "712,340 750,395 785,422 828,390 865,405 915,450 935,490 975,520 1000,520 1050,550 1060,575 1115,590 1157,550",
    "750,400 730,420 712,465 690,465", "545,200 550,260 570,320 570,345 620,405 690,460 715,465 730,490 775,520 770,528 690,515", "605,513 590,475 560,430 535,380", "605,222 670,222 720,212 740,240", "635,80 640,140 660,200 672,220 665,170 665,110 640,80", "555,180 580,180 600,222",
    "510,450 545,475 550,500 585,515 585,545 640,555 685,582 750,600 795,605 850,618 885,610 900,575 950,565 975,535 1010,530 1050,550", "1005,525 1015,555 1055,572", "830,718 865,760 915,800 945,800", "800,605 820,675 900,685 925,725 965,765 1005,708 1100,715", "917,625 970,655 975,672 1010,662 1050,690 1070,712",
    "1125,590 1130,650 1165,635 1200,660 1225,682 1235,660", "1120,925 1165,905", "1120,928 1120,1000", "370,415 460,435 510,450 490,475 410,490", "540,375 555,400 520,420",
  ].map((s) => parse(s, 1020)),
];
const borders: P[][] = [
  ...["1028,950 1028,1203", "1120,811 1245,811", "1003,755 1078,755 1075,788", "1003,755 1003,785"].map((s) => parse(s)),
  ...["713,242 713,340", "665,292 712,340", "1008,330 1040,390 1025,440 1040,465", "1040,390 1103,315 1150,328 1180,325", "620,600 690,583 790,717", "730,718 830,718", "917,568 917,625", "917,715 917,798", "1103,585 1103,780 1100,835", "1103,781 1220,781", "1165,905 1198,905", "605,513 690,514"].map((s) => parse(s, 1020)),
];
const clusters = [
  [545, 275, 13, 80], [560, 420, 24, 110], [660, 475, 20, 80], [825, 620, 14, 80], [840, 800, 14, 100], [740, 870, 12, 120], [620, 985, 12, 120], [470, 800, 15, 100],
  [430, 970, 14, 90], [340, 920, 18, 60], [560, 1050, 15, 100], [385, 1090, 15, 80], [340, 1220, 17, 110], [240, 1415, 11, 85], [460, 1270, 18, 100], [700, 960, 15, 80], [450, 430, 20, 60],
];
const spacing = (x: number, y: number) => {
  const base = x < 330 ? 58 : 45;
  let r = base;
  for (const [cx, cy, rc, R] of clusters) {
    const t = Math.min(1, Math.hypot(x - cx, (y - cy) * 0.85) / R / 1.25);
    r = Math.min(r, rc + (base - rc) * t * t);
  }
  return r;
};
/* smooth distortion shared by all cells, so that common borders stay common */
const warp = (p: P): P => {
  const [x, y] = p;
  return [
    x + 7 * Math.sin(y / 15 + 2 * Math.sin(x / 31)) + 4 * Math.sin(x / 11 + y / 7),
    y + 7 * Math.sin(x / 17 + 2 * Math.sin(y / 27)) + 4 * Math.sin(y / 9 - x / 8),
  ];
};
const buildMesh = () => {
  let seed = 20211;
  const rnd = () => { seed = (seed * 1664525 + 1013904223) % 4294967296; return seed / 4294967296; };
  const pts: P[] = [];
  for (let i = 0; i < 14000; i++) {
    const x = 40 + rnd() * 880, y = 40 + rnd() * 1490, r = spacing(x, y) * (0.5 + rnd() * 0.9);
    let ok = true;
    for (let j = 0; j < pts.length; j++) {
      const dx = pts[j][0] - x, dy = pts[j][1] - y;
      if (dx * dx + dy * dy < r * r) { ok = false; break; }
    }
    if (ok) pts.push([x, y]);
  }
  const paths: string[] = [];
  pts.forEach((p, i) => {
    let cell: P[] = [[p[0] - 80, p[1] - 80], [p[0] + 80, p[1] - 80], [p[0] + 80, p[1] + 80], [p[0] - 80, p[1] + 80]];
    pts.forEach((q, j) => {
      const dx = q[0] - p[0], dy = q[1] - p[1];
      if (i === j || Math.abs(dx) > 150 || Math.abs(dy) > 150) return;
      const mx = (p[0] + q[0]) / 2, my = (p[1] + q[1]) / 2;
      const side = (c: P) => (c[0] - mx) * dx + (c[1] - my) * dy;
      const next: P[] = [];
      for (let k = 0; k < cell.length; k++) {
        const a = cell[k], b = cell[(k + 1) % cell.length], sa = side(a), sb = side(b);
        if (sa <= 0) next.push(a);
        if ((sa < 0 && sb > 0) || (sa > 0 && sb < 0)) { const t = sa / (sa - sb); next.push([a[0] + (b[0] - a[0]) * t, a[1] + (b[1] - a[1]) * t]); }
      }
      cell = next;
    });
    const snapped = cell.map((c) => warp(c).map(Math.round) as P);
    if (snapped.length > 2) paths.push(toPath(snapped, 0.9, true));
  });
  return paths.join("");
};
const mesh = buildMesh();

const ColombiaMap = () => (
  <svg width="666" height="891" viewBox="281 102 666 891" shapeRendering="crispEdges">
    <defs>
      <clipPath id="land"><path d={outline} /></clipPath>
      <clipPath id="andes"><path d={toPath(parse(zone), 0, true)} /></clipPath>
    </defs>
    <g transform="translate(400 220) scale(.33333)" fill="none" stroke="#6e6e6e" strokeWidth="3.600">
      <path d={outline} fill="#c8f2d0" strokeWidth="4.500" />
      <g clipPath="url(#land)">
        <g clipPath="url(#andes)"><path d={mesh} /></g>
        <path d={rivers.map((r) => toPath(r, 0.9)).join("")} strokeWidth="4.200" />
        <path d={borders.map((r) => toPath(r, 0)).join("")} strokeWidth="3" />
      </g>
      <path d={toPath(parse("1505,310 1525,310 1530,330 1545,345 1553,380 1525,390 1515,375 1522,350", 1020), 0.3, true)} fill="#c8f2d0" />
      <path d={toPath(parse("1518,350 1535,340", 1020), 0)} />
    </g>
    <path d="M326 188l1-3 2 3zM311 222l1-4h2l-1 4z" fill="#6e6e6e" stroke="#6e6e6e" strokeWidth="1" />
  </svg>
);

/* ---------- data ---------- */
const rows: [string, string][] = [
  ["Abejorral", "6"], ["Ábrego", "6"], ["Abriaquí", "6"], ["Acacías", "3"], ["Acandí", "6"], ["Acevedo", "6"], ["Achí", "6"], ["", "6"], ["", "6"], ["", "4"],
  ["", "6"], ["", "6"], ["", "5"], ["Agustín Codazzi", "4"], ["", "6"], ["", "6"], ["", "6"], ["", "6"], ["Albania", "6"], ["Albania", "6"],
  ["Alcalá", "6"], ["Aldana", "6"], ["Alejandría", "6"], ["Algarrobo", "6"], ["Algeciras", "6"], ["Almaguer", "6"], ["Almeida", "6"], ["Alpujarra", "6"], ["Altamira", "6"],
];
const menu: [string, number][] = [["File", 18], ["Edit", 20], ["View", 25], ["Bookmarks", 59], ["Insert", 29], ["Selection", 48], ["Geoprocessing", 78], ["Customize", 56], ["Windows", 49], ["Help", 30]];

export default function App() {
  return (
    <Window>
      <Global />
      <TitleBar>
        <TitleLeft>
          <Ic><circle cx="8" cy="8" r="7.500" fill="#17466e" /><path d="M2 5c3-4 5-3 6-2s-1 3-3 4-3 1-3-2z" fill="#5ca06b" /><circle cx="9" cy="7" r="4" fill="#bfe5f5" stroke="#e8eef2" strokeWidth="1.200" /><path d="M12 10l3.500 4.500" stroke="#222" strokeWidth="2" /></Ic>
          <span>Untitled - ArcMap</span>
        </TitleLeft>
        <WinButtons>
          <svg width="11" height="11"><path d="M1 5.500h10" stroke="#888" /></svg>
          <svg width="11" height="11" fill="none" stroke="#888"><rect x=".5" y="2.500" width="7" height="7" rx="1" /><path d="M2.500 2.500v-1q0-1 1-1h5q1 0 1 1v5q0 1-1 1h-1" /></svg>
          <Close s={11} c="#888" w={0.9} />
        </WinButtons>
      </TitleBar>
      <MenuBar>{menu.map(([t, w]) => <MenuItem key={t} $w={w}>{t}</MenuItem>)}</MenuBar>
      <ToolRow $left={4} $h={26}>
        <Toolbar>
          <Grip />
          <Tools items={["new", "open", "save", "print", "|", "cut", "copy", "paste", "del", "|", "undo", "redo", "|", "add", "v", "|"]} />
          <ScaleBox><span>1:10,216,662</span><Chevron /></ScaleBox>
          <Tools items={["|", "*edit", "|", "toc", "catalog", "search", "toolbox", "python", "|", "model"]} />
          <Overflow />
        </Toolbar>
        <Toolbar>
          <Grip />
          <EditorLabel>Editor</EditorLabel>
          <Tools items={["v", "|", "eArrow", "eArrowA", "|", "eLine", "eArc", "~", "ePoly", "d", "eSun", "|", "eRect", "eTri", "eSplit", "eCross", "eRot", "|", "eTable", "eProps", "|", "eCreate"]} />
          <Overflow />
        </Toolbar>
      </ToolRow>
      <ToolRow $left={9} $h={25}>
        <Toolbar>
          <Grip />
          <Tools items={["~", "zin", "zout", "*hand", "globe", "|", "fixin", "fixout", "|", "back", "fwd", "|", "select", "v", "clear", "|", "arrow", "|", "info", "bolt", "popup", "|", "measure", "|", "bino", "route", "xy", "|", "time", "|", "viewer"]} />
          <Overflow />
        </Toolbar>
      </ToolRow>
      <Body>
        <TocPanel>
          <PanelTitle><span>Table Of Contents</span><TitleIcons $gap={5}><Pin /><Close /></TitleIcons></PanelTitle>
          <PanelTools $pad={4}><Tools items={["*tOrder", "tSource", "tVis", "tSel", "|", "list"]} /></PanelTools>
          <Tree>
            <TreeRow $in={1}><Expander /><Slot $w={27}>{icons.layers}</Slot><Bold>Layers</Bold></TreeRow>
            <TreeRow $in={20}>
              <Expander />
              <Check><svg width="9" height="9" viewBox="0 0 9 9"><path d="M1.500 4.500l2 2.500L7.500 1.500" fill="none" stroke="#000" strokeWidth="1.800" /></svg></Check>
              <Selected>municipios202110</Selected>
            </TreeRow>
            <TreeRow $in={52}><Swatch /></TreeRow>
          </Tree>
        </TocPanel>
        <MapFrame>
          <MapView><ColombiaMap /></MapView>
          <ScrollCol $top={16} $len={858} $right={2} />
          <MapFoot>
            <FootSlot $w={15} $on><svg width="9" height="11"><rect x=".5" y=".5" width="8" height="10" fill="#b8d88a" stroke="#333" /><path d="M2 8l3-5 2 5" fill="#5a9cc0" /></svg></FootSlot>
            <FootSlot $w={14}><svg width="9" height="11"><path d="M.5.500h5l3 3v7h-8z" fill="#fff" stroke="#333" /><path d="M3 5h2v2H3zM3 8.500h4" stroke="#2a6496" fill="#2a6496" /></svg></FootSlot>
            <Sep $w={6} />
            <FootSlot $w={17}><svg width="10" height="11" viewBox="0 0 10 11" fill="none" stroke="#1d4f88" strokeWidth="1.300"><path d="M1.500 5C2 1.500 6 .5 8 3M8.500 6C8 9.500 4 10.500 2 8" /><path d="M8.500.500V4H5M1.500 10.500V7H5" /></svg></FootSlot>
            <FootSlot $w={14}><svg width="7" height="8"><path d="M0 0h2v8H0zM4 0h2v8H4z" fill="#1d4f9c" /></svg></FootSlot>
            <HThumb $w={555} $ml={27} />
          </MapFoot>
        </MapFrame>
        <TablePanel>
          <PanelTitle $active><span>Table</span><TitleIcons><Pin /><Close /></TitleIcons></PanelTitle>
          <PanelTools $pad={4}>
            <OptionsBtn>{icons.list}<OptionsArrow><Caret $w={9} /></OptionsArrow><PointerDot /></OptionsBtn>
            <Tools items={["|", "related", "v", "|", "byattr", "switch", "clear", "zoomsel", "del"]} />
          </PanelTools>
          <PanelTitle $active><span>municipios202110</span><Close /></PanelTitle>
          <GridFrame>
            <Grid>
              <HeadRow>
                <HeadCell /><BlackLine /><HeadCell $ls={0.75}>MpNombre</HeadCell><BlackLine /><HeadCell>Ley6172000</HeadCell>
                <HeadCell $focus $ls={0.6}>Areakm2<HeadDot $l={10} /></HeadCell>
              </HeadRow>
              {rows.map(([name, ley], i) => (
                <Row key={i}><RowHead /><BlackLine /><Cell>{name}</Cell><BlackLine /><LeyCell>{ley}</LeyCell><Cell $num>0</Cell></Row>
              ))}
            </Grid>
            <ScrollCol $top={18} $len={17} />
            <HScroll><HThumb $w={124} $ml={763} /></HScroll>
          </GridFrame>
          <NavBar>
            <Slot $w={29}><Play left bar /></Slot>
            <Slot $w={19}><Play left /></Slot>
            <NavInput>0</NavInput>
            <Slot $w={22}><Play /></Slot>
            <Slot $w={22}><Play bar /></Slot>
            <Sep /><Slot $on>{icons.all}</Slot><Slot>{icons.some}</Slot><Sep />
            <NavText>(0 out of 1122 Selected)</NavText>
          </NavBar>
          <BottomTab><TabText>municipios202110</TabText></BottomTab>
        </TablePanel>
        <Dock>
          <DockTab $h={117}>
            <Ic><path d="M.5 1.500h12v13H.5z" fill="#fff" stroke="#555" /><path d="M2 3.500h3v2H2z" fill="#4a88c8" /><path d="M2 7h3v2H2z" fill="#5aa04a" /><path d="M2 10.500h3v2H2z" fill="#d8742c" /><path d="M7 5h4M7 12h4" stroke="#8ab" /><path d="M8 9l7-7" stroke="#e5b45c" strokeWidth="2.400" /><path d="M7 11l.5-2.500 2 1.500z" fill="#222" /></Ic>
            <Vertical>Create Features</Vertical>
          </DockTab>
          <DockTab $h={72}>{icons.catalog}<Vertical>Catalog</Vertical></DockTab>
        </Dock>
      </Body>
      <StatusBar>
        <StatusBox $w={127} /><StatusBox $w={18} /><StatusBox $w={253}>{"5755484.763  3124969.308 Meters"}</StatusBox>
      </StatusBar>
      <Dialog>
        <DialogTitle><span>Add Field</span><Close s={11} c="#888" w={0.9} /></DialogTitle>
        <Form>
          <Label>Name:</Label><Input>Areakm2<InputDot /></Input>
          <Label>Type:</Label><Select>Double<Dot $l={8} /><Spacer /><Chevron /></Select>
        </Form>
        <Group>
          <Legend>Field Properties</Legend>
          <Props><span>Precision</span><span>0</span><span>Scale</span><span>0</span></Props>
        </Group>
        <Buttons><Button>OK</Button><Button>Cancel</Button></Buttons>
      </Dialog>
    </Window>
  );
}
